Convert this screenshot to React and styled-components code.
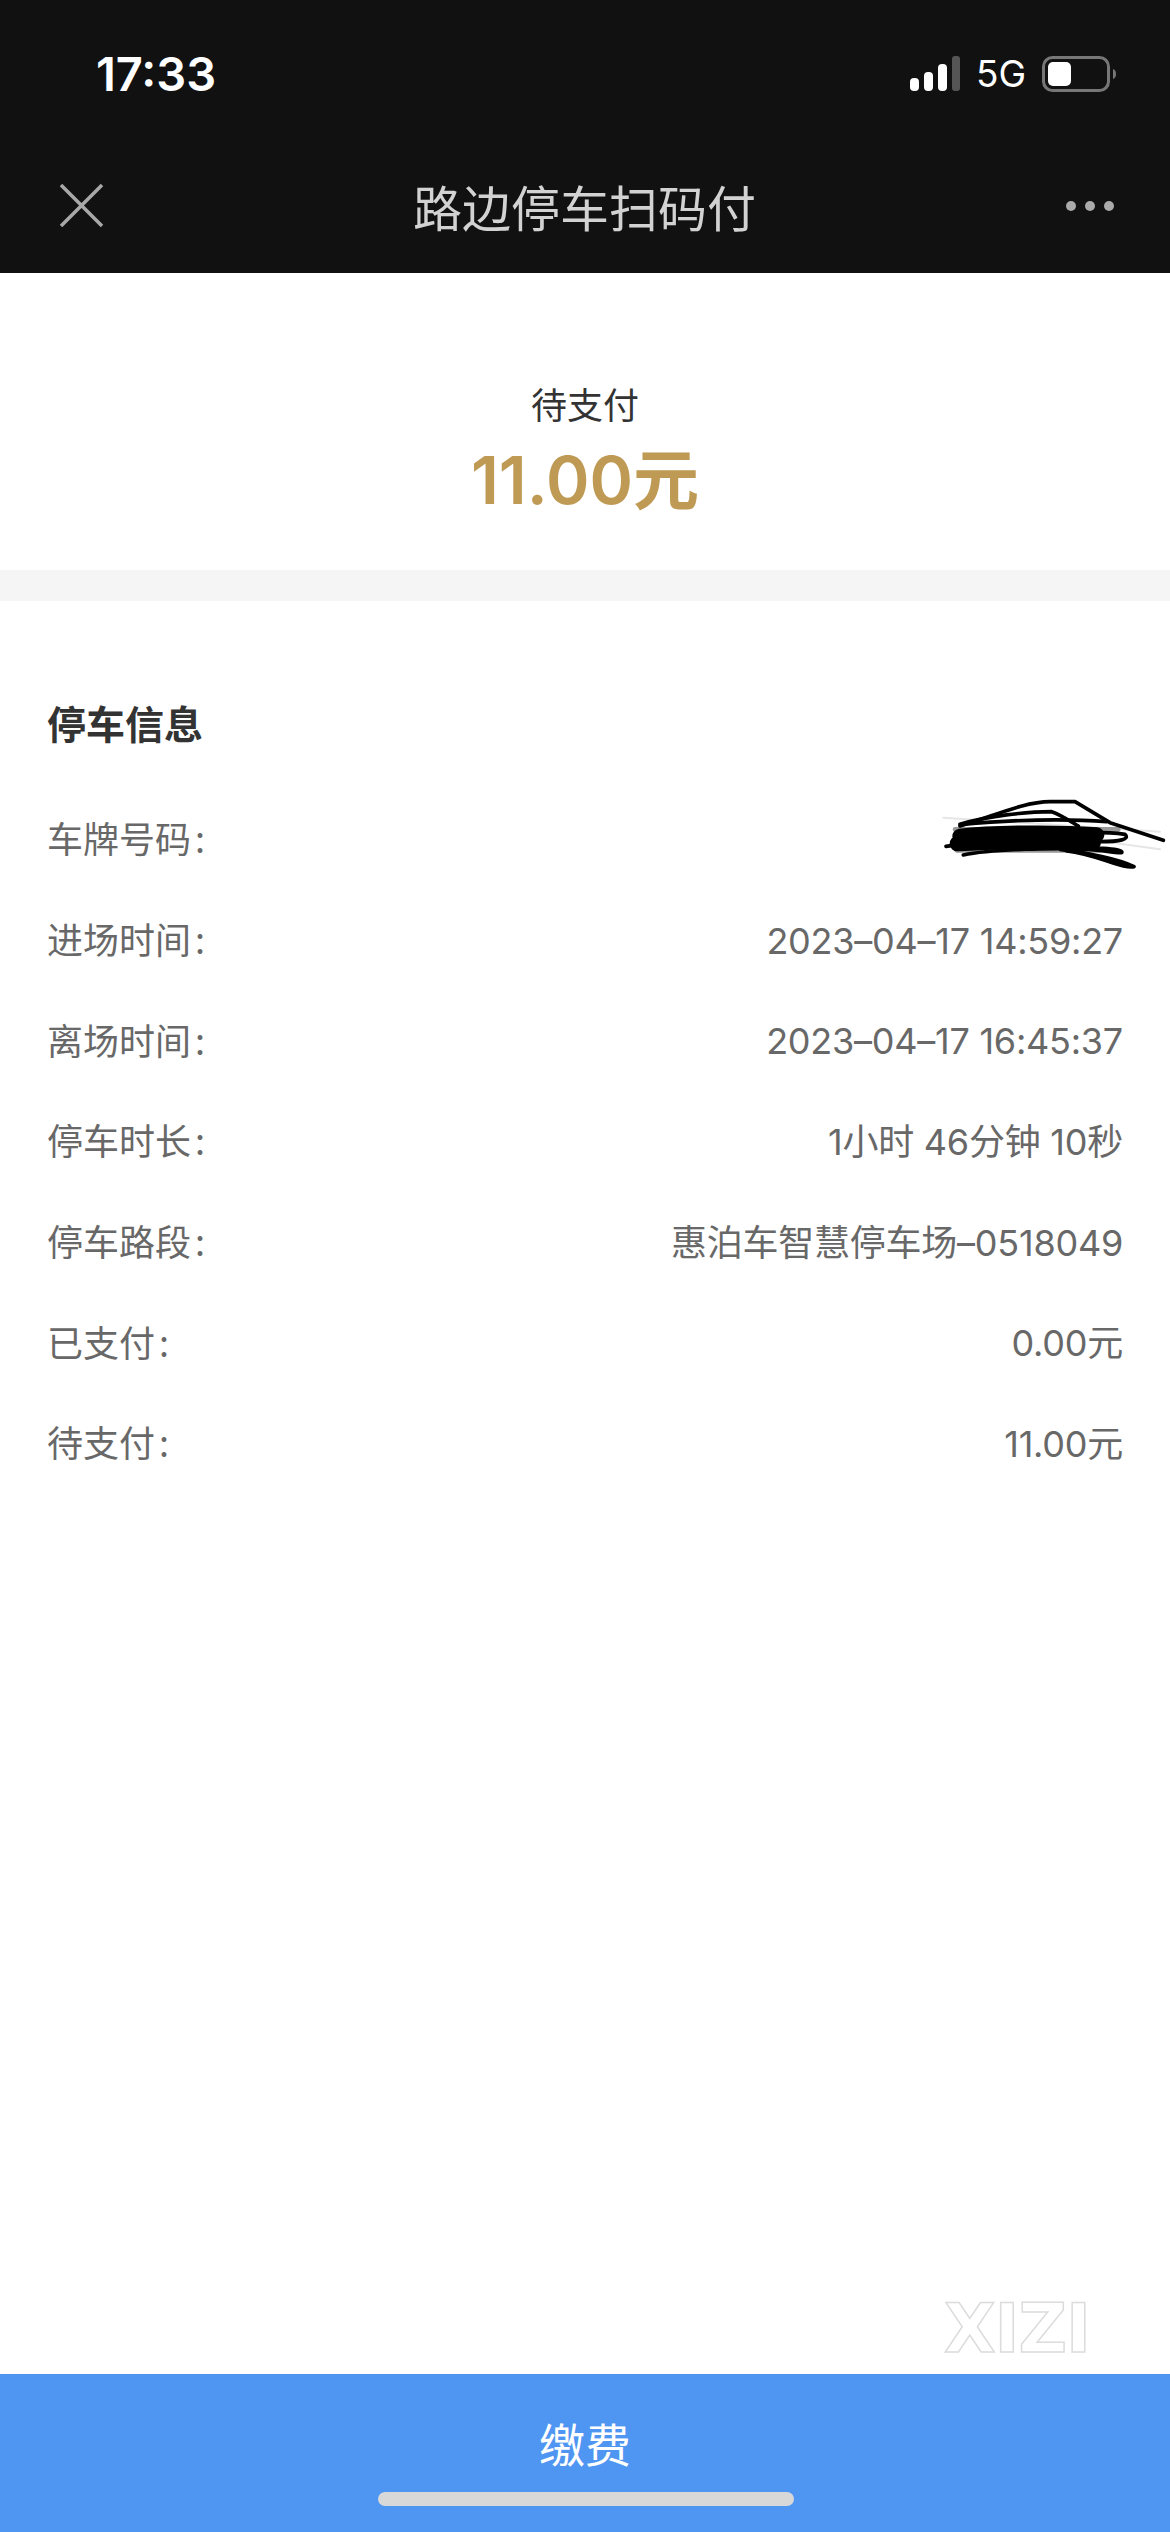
import React from 'react';
import styled, { createGlobalStyle } from 'styled-components';

const Global = createGlobalStyle`
  html, body { margin: 0; padding: 0; background: #fff; }
  * { box-sizing: border-box; }
  body { font-family: Inter, "Noto Sans CJK SC", sans-serif; }
`;
const Page = styled.div`
  position: relative;
  width: 1170px;
  height: 2532px;
  display: flex;
  flex-direction: column;
  background: #fff;
  overflow: hidden;
`;
const Header = styled.header`
  height: 273px;
  background: #111112;
  display: flex;
  flex-direction: column;
  flex: none;
`;
const StatusBar = styled.div`
  height: 138px;
  display: flex;
  align-items: flex-start;
  justify-content: space-between;
  padding: 45px 52px 0 96px;
`;
const Clock = styled.div`
  font: 600 47px/58px Inter, sans-serif;
  color: #fff;
`;
const StatusIcons = styled.div`
  display: flex;
  align-items: center;
  gap: 16px;
  height: 58px;
`;
const NetLabel = styled.span`
  font: 400 37px/42px Inter, sans-serif;
  color: #fff;
`;
const NavBar = styled.div`
  flex: 1;
  display: flex;
  align-items: center;
  justify-content: space-between;
  padding: 0 55px 0 59px;
`;
const NavTitle = styled.div`
  font: 400 49px/64px "Noto Sans CJK SC", sans-serif;
  color: #d2d2d2;
`;
const Hero = styled.section`
  height: 297px;
  flex: none;
  display: flex;
  flex-direction: column;
  align-items: center;
  padding-top: 105px;
`;
const HeroLabel = styled.div`
  font: 400 36px/50px "Noto Sans CJK SC", sans-serif;
  color: #333;
`;
const HeroAmount = styled.div`
  font: 600 66px/84px Inter, "Noto Sans CJK SC", sans-serif;
  color: #bf9a55;
  margin-top: 10px;
`;
const Band = styled.div`
  height: 31px;
  flex: none;
  background: #f5f5f5;
`;
const Info = styled.section`
  flex: 1;
  padding: 93px 47px 0 47px;
`;
const InfoTitle = styled.h2`
  margin: 0 0 37px;
  font: 700 39px/56px "Noto Sans CJK SC", sans-serif;
  color: #333;
`;
const Row = styled.div`
  position: relative;
  height: 100.7px;
  display: flex;
  align-items: center;
  justify-content: space-between;
`;
const Label = styled.span`
  font: 400 36px/50px "Noto Sans CJK SC", sans-serif;
  color: #686868;
  &::after { content: ":"; margin-left: 4px; }
`;
const Value = styled.span`
  font: 400 36px/50px Inter, "Noto Sans CJK SC", sans-serif;
  letter-spacing: -0.24px;
  color: #686868;
  padding-top: 5px;
`;
const Scribble = styled.svg`
  position: absolute;
  right: -47px;
  top: -16px;
`;
const Watermark = styled.div`
  position: absolute;
  right: 80px;
  top: 2298px;
  font: 700 67px/62px "DejaVu Sans", sans-serif;
  letter-spacing: -1px;
  color: #fff;
  -webkit-text-stroke: 1.5px #dcdcdc;
`;
const PayButton = styled.button`
  flex: none;
  height: 158px;
  width: 100%;
  border: 0;
  padding: 0 0 22px;
  background: #4f95f2;
  color: #fff;
  font: 400 46px/64px "Noto Sans CJK SC", sans-serif;
`;
const HomeBar = styled.div`
  position: absolute;
  left: 378px;
  bottom: 26px;
  width: 416px;
  height: 14px;
  border-radius: 7px;
  background: #d8d8d8;
`;

const rows = [
  ['进场时间', '2023–04–17 14:59:27'],
  ['离场时间', '2023–04–17 16:45:37'],
  ['停车时长', '1小时 46分钟 10秒'],
  ['停车路段', '惠泊车智慧停车场–0518049'],
  ['已支付', '0.00元'],
  ['待支付', '11.00元'],
];

export default function App() {
  return (
    <Page>
      <Global />
      <Header>
        <StatusBar>
          <Clock>17:33</Clock>
          <StatusIcons>
            <svg width="50" height="36" viewBox="0 0 50 36">
              <rect x="0" y="22" width="9" height="13" rx="4" fill="#fff" />
              <rect x="14" y="16" width="9" height="19" rx="4" fill="#fff" />
              <rect x="28" y="8" width="9" height="27" rx="4" fill="#fff" />
              <rect x="42" y="0" width="8" height="35" rx="3" fill="#555" />
            </svg>
            <NetLabel>5G</NetLabel>
            <svg width="76" height="36" viewBox="0 0 76 36">
              <rect x="1.5" y="1.5" width="65" height="33" rx="9" fill="none" stroke="#777" strokeWidth="3" />
              <rect x="6" y="6" width="23" height="24" rx="5" fill="#fff" />
              <path d="M71 13 C75 14 75 22 71 23 Z" fill="#777" />
            </svg>
          </StatusIcons>
        </StatusBar>
        <NavBar>
          <svg width="45" height="45" viewBox="0 0 45 45">
            <path d="M2 2 L43 43 M43 2 L2 43" stroke="#a8a8a8" strokeWidth="3.5" fill="none" />
          </svg>
          <NavTitle>路边停车扫码付</NavTitle>
          <svg width="50" height="12" viewBox="0 0 50 12">
            <circle cx="6" cy="6" r="5" fill="#aaa" />
            <circle cx="25" cy="6" r="5" fill="#aaa" />
            <circle cx="44" cy="6" r="5" fill="#aaa" />
          </svg>
        </NavBar>
      </Header>
      <Hero>
        <HeroLabel>待支付</HeroLabel>
        <HeroAmount>11.00元</HeroAmount>
      </Hero>
      <Band />
      <Info>
        <InfoTitle>停车信息</InfoTitle>
        <Row>
          <Label>车牌号码</Label>
          <Scribble width="290" height="110" viewBox="0 0 870 330" fill="none" strokeLinecap="round" strokeLinejoin="round">
            <path stroke="#e6e6e6" strokeWidth="6" d="M190 140 L840 182 M660 210 L840 235" />
            <path stroke="#999" strokeWidth="14" d="M225 175 H715 M230 238 H660" />
            <path stroke="#000" strokeWidth="11" d="M240 165 C330 140 430 92 510 92 L585 92 L690 155 L850 208" />
            <path stroke="#000" strokeWidth="11" d="M240 160 C320 135 440 122 515 122 C540 130 570 150 595 165" />
            <path stroke="#000" strokeWidth="11" d="M245 160 C360 150 530 140 680 152" />
            <path stroke="#000" strokeWidth="46" d="M240 196 C330 186 520 182 650 192 M232 218 C330 212 520 208 640 214" />
            <path stroke="#000" strokeWidth="11" d="M198 226 C340 205 600 170 735 190 C750 205 720 212 660 212 M250 252 C340 232 520 232 670 232 C700 234 730 238 725 245 C690 246 620 225 540 235 C620 245 720 265 762 287 C730 295 650 250 560 240" />
          </Scribble>
        </Row>
        {rows.map(([k, v]) => (
          <Row key={k}>
            <Label>{k}</Label>
            <Value>{v}</Value>
          </Row>
        ))}
      </Info>
      <Watermark>XIZI</Watermark>
      <PayButton>缴费</PayButton>
      <HomeBar />
    </Page>
  );
}
